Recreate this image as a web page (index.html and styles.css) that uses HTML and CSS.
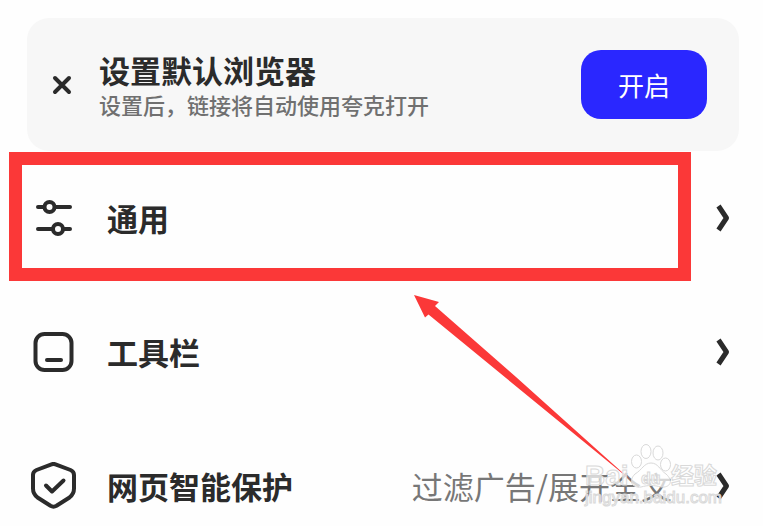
FILE: index.html
```html
<!DOCTYPE html>
<html lang="zh-CN">
<head>
    <meta charset="UTF-8">
    <meta name="viewport" content="width=device-width, initial-scale=1.0">
    <title>设置</title>
    <link rel="stylesheet" href="styles.css">
</head>
<body>
    <main class="settings">
        <section class="banner">
            <button type="button" class="banner-close" aria-label="关闭">
                <svg width="20" height="20" viewBox="0 0 20 20">
                    <path d="M3 3l14 14M17 3l-14 14"/>
                </svg>
            </button>
            <div class="banner-text">
                <h1>设置默认浏览器</h1>
                <p>设置后，链接将自动使用夸克打开</p>
            </div>
            <button type="button" class="banner-action">开启</button>
        </section>

        <ul class="menu">
            <li class="menu-item highlighted">
                <a href="#general">
                    <svg class="icon" width="48" height="48" viewBox="0 0 48 48">
                        <path d="M8 13h6M25 13h15M8 35h14M34 35h6"/>
                        <circle cx="19.5" cy="13" r="5"/>
                        <circle cx="28" cy="35" r="5"/>
                    </svg>
                    <span class="label">通用</span>
                    <svg class="chevron" width="16" height="32" viewBox="0 0 16 32">
                        <path d="M3.5 4l8 12-8 12"/>
                    </svg>
                </a>
            </li>
            <li class="menu-item">
                <a href="#toolbar">
                    <svg class="icon" width="48" height="48" viewBox="0 0 48 48">
                        <rect x="5.5" y="6" width="36" height="36" rx="9"/>
                        <path d="M17 32h14"/>
                    </svg>
                    <span class="label">工具栏</span>
                    <svg class="chevron" width="16" height="32" viewBox="0 0 16 32">
                        <path d="M3.5 4l8 12-8 12"/>
                    </svg>
                </a>
            </li>
            <li class="menu-item">
                <a href="#protection">
                    <svg class="icon" width="48" height="48" viewBox="0 0 48 48">
                        <path d="M21.5 2.3q2-.8 4 0L40.5 8Q44 9.5 44 13V26.5Q44 32 39.5 35.5L26.5 43.8Q23.5 45.5 20.5 43.8L7.5 35.5Q3 32 3 26.5V13Q3 9.5 6.5 8z"/>
                        <path d="M16 23.5l6 6L33.5 18.5"/>
                    </svg>
                    <span class="label">网页智能保护</span>
                    <span class="value">过滤广告/展开全文</span>
                    <svg class="chevron" width="16" height="32" viewBox="0 0 16 32">
                        <path d="M3.5 4l8 12-8 12"/>
                    </svg>
                </a>
            </li>
        </ul>

        <!-- Pointer to the highlighted item -->
        <svg class="arrow" width="220" height="188" viewBox="0 0 220 188">
            <path d="M0 0L25 7L21 11L102 82L219 187L92 83L14.500 19.500L11 22.500z"/>
        </svg>

        <!-- Watermark -->
        <svg class="watermark" width="144" height="72" viewBox="0 0 144 72">
            <ellipse cx="56.5" cy="21.500" rx="5" ry="6.500"/>
            <ellipse cx="66" cy="11.500" rx="5" ry="7"/>
            <ellipse cx="78" cy="13" rx="5" ry="7"/>
            <ellipse cx="85.500" cy="24.500" rx="5" ry="6.500"/>
            <path d="M71 23C78 23 80 30 86 34C94 41 90 48 81 47C74 45 68 45 61 47C52 48 48 41 55 34C62 30 64 23 71 23z"/>
            <text class="wm-name" x="5" y="45">Bai</text>
            <text class="wm-du" x="61" y="44">du</text>
            <text class="wm-cn" x="91" y="44">经验</text>
            <text class="wm-url" x="5" y="63">jingyan.baidu.com</text>
        </svg>
    </main>
</body>
</html>
```
FILE: styles.css
```css
* {
    box-sizing: border-box;
}

body {
    margin: 0;
    background: #fefefe;
    color: #2b2b2b;
    font-family: "Noto Sans CJK SC", sans-serif;
}

.settings {
    position: relative;
    padding: 18px 24px 0 27px;
}

/* Banner */
.banner {
    display: flex;
    align-items: center;
    padding: 32px;
    padding-left: 25px;
    background: #f7f7f7;
    border-radius: 22px;
}

button {
    border: none;
    font-family: inherit;
    cursor: pointer;
}

.banner-close {
    width: 20px;
    height: 20px;
    padding: 0;
    background: none;
}

.banner-close svg {
    display: block;
    fill: none;
    stroke: #2b2b2b;
    stroke-width: 4;
    stroke-linecap: round;
}

.banner-text {
    flex: 1;
    padding-left: 27px;
}

.banner h1 {
    margin: 0;
    font-size: 31px;
    line-height: 38px;
    font-weight: 700;
}

.banner p {
    margin: 0;
    color: #707070;
    font-size: 22px;
    line-height: 30px;
    font-weight: 500;
}

.banner-action {
    width: 126px;
    height: 69px;
    padding: 0;
    border-radius: 20px;
    background: #2a27ff;
    color: #fff;
    font-size: 26px;
}

/* Menu */
.menu {
    display: flex;
    flex-direction: column;
    gap: 54px;
    margin: 0;
    padding: 27px 0 0;
    list-style: none;
}

.menu-item {
    position: relative;
}

.menu-item a {
    display: flex;
    align-items: center;
    height: 80px;
    padding: 0 8px 0 3px;
    color: inherit;
    text-decoration: none;
}

.icon,
.chevron {
    flex: none;
    fill: none;
    stroke: #2b2b2b;
    stroke-width: 4;
    stroke-linecap: round;
    stroke-linejoin: round;
}

.chevron {
    stroke-width: 5;
    stroke-linecap: butt;
}

.label {
    flex: 1;
    padding-left: 29px;
    font-size: 31px;
    line-height: 40px;
    font-weight: 700;
}

.value {
    margin-right: 43px;
    color: #777;
    font-size: 31px;
    line-height: 40px;
}

.highlighted::after {
    content: "";
    position: absolute;
    top: -26px;
    right: 48px;
    bottom: -23px;
    left: -18px;
    border: 13px solid #fb3838;
    pointer-events: none;
}

/* Overlays */
.arrow {
    position: absolute;
    right: 129px;
    bottom: 43px;
    fill: #fb3838;
    pointer-events: none;
}

.watermark {
    position: absolute;
    right: 39px;
    bottom: 14px;
    fill: rgba(255, 255, 255, 0.7);
    stroke: #d9d9d9;
    stroke-width: 1;
    pointer-events: none;
}

.wm-name {
    font: bold 28px "Liberation Sans", sans-serif;
}

.wm-du {
    font: bold 16px "Liberation Sans", sans-serif;
}

.wm-cn {
    font-size: 23px;
    font-weight: 700;
}

.wm-url {
    font: 17px "Liberation Sans", sans-serif;
}
```
